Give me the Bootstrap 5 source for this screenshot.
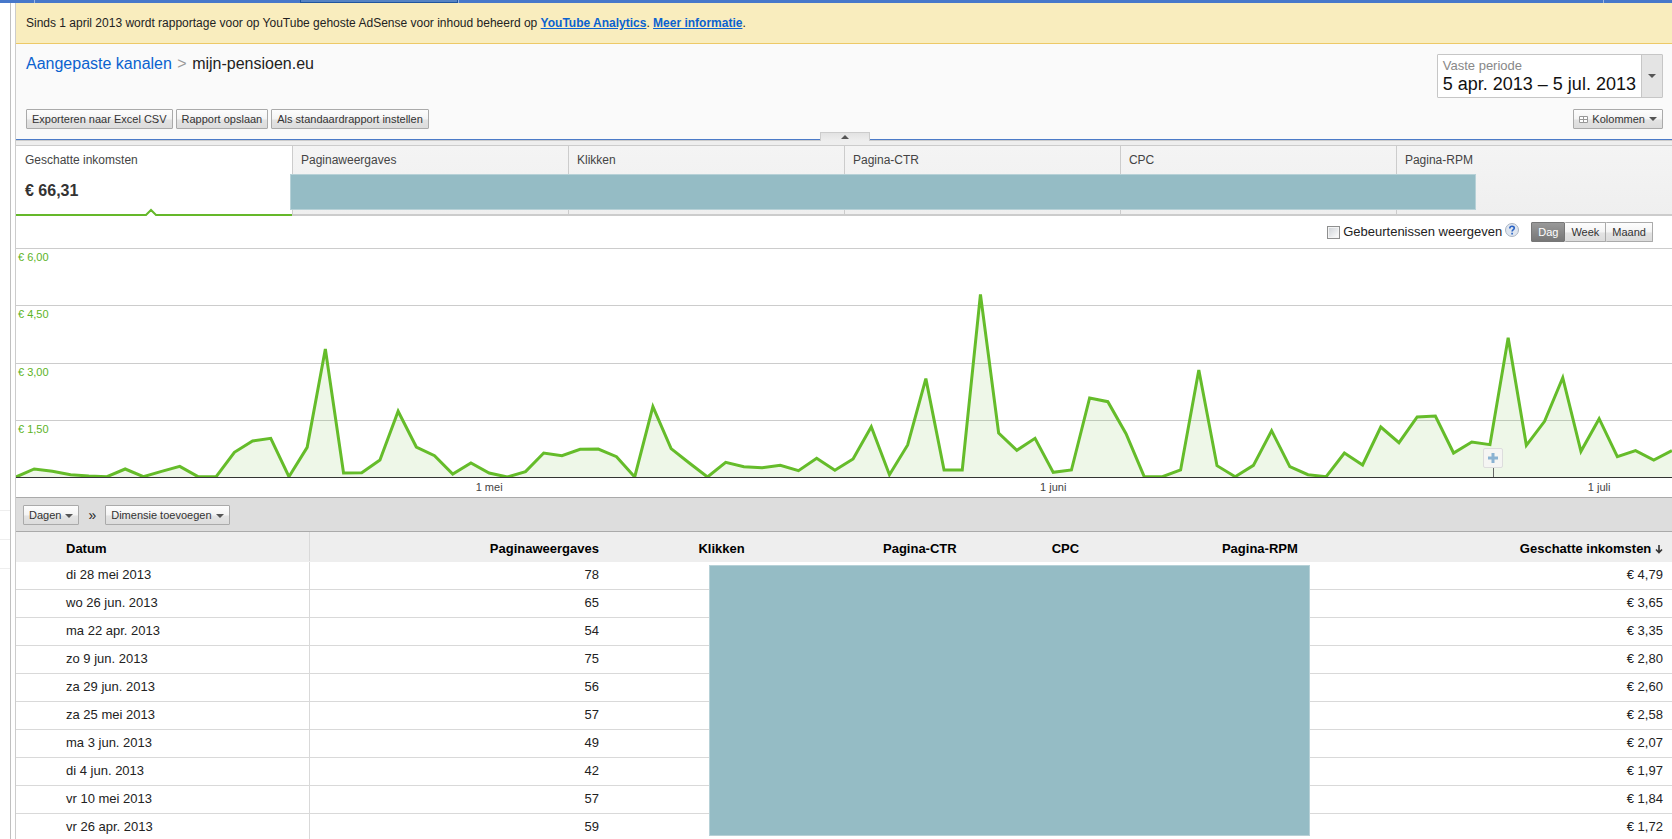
<!DOCTYPE html>
<html lang="nl">
<head>
<meta charset="utf-8">
<meta name="viewport" content="width=device-width, initial-scale=1">
<title>Prestatierapporten</title>
<link rel="stylesheet" href="https://cdn.jsdelivr.net/npm/bootstrap@5.3.0/dist/css/bootstrap.min.css">
<style>
  body { font-family: "Liberation Sans", Arial, sans-serif; font-size: 13px; line-height: 16px; color: #222; background: #fff; }
  a { color: #0b62cf; }

  /* Top strip */
  .topstrip { height: 3px; background: #4778ca; padding-left: 34px; }
  .topstrip .tick { width: 1px; background: #9db7e2; }
  .topstrip .tab-now { width: 158px; background: #5583c4; border: 1px solid #1f559f; border-top: 0; margin-left: 265px; }
  .topstrip .tick-end { margin-right: 68px; }

  /* Side strip */
  .sidestrip { width: 16px; border-right: 1px solid #ccc; }
  .sidestrip .inner { width: 11px; border-right: 1px solid #c0c0c0; padding-top: 507px; }
  .sidestrip .inner hr { margin: 0 0 28px; border-color: #bbb; }

  .notice { height: 41px; background: #f9edbe; border-bottom: 1px solid #edc967; font-size: 12px; color: #222; padding: 0 10px; }

  /* Report header */
  .report-head { background: #fafafa; border-bottom: 1px solid #4c7bc8; padding: 10px 9px 10px 10px; }
  .crumbs { font-size: 16px; line-height: 20px; }
  .crumbs .sep { color: #999; margin: 0 1px; }
  .actions { margin-top: 11px; }
  .period { border: 1px solid #c6c6c6; border-radius: 1px; background: #fff; height: 44px; padding: 0; color: #111; text-align: left; }
  .period .txt { padding: 3px 5px 0; font-size: 18px; line-height: 20px; }
  .period .txt small { font-size: 13px; line-height: 16px; color: #888; display: block; }
  .period .drop { width: 21px; background: #e4e4e4; border-left: 1px solid #c6c6c6; }
  .btn-adm { font-size: 11px; line-height: 18px; padding: 0 5px; color: #333; white-space: nowrap;
    border: 1px solid #aaa; border-radius: 1px; background: linear-gradient(#fdfdfd 0, #f4f4f4 50%, #e3e3e3 55%, #dcdcdc 100%); }
  .btn-adm:hover { border-color: #777; color: #111; }
  .btn-adm.active { color: #fff; border-color: #777; background: linear-gradient(#999, #777); }
  .scale-pick .btn-adm { padding: 0 6px; }
  .caret { width: 0; height: 0; border: 4px solid transparent; border-top-color: #555; border-bottom: 0; display: inline-block; vertical-align: middle; }
  .gap-3px { gap: 3px; }

  .fold { height: 6px; background: #eee; border-top: 1px solid #ccc; border-bottom: 1px solid #ccc; }
  .fold button { top: -9px; left: 50%; margin-left: -24px; width: 50px; height: 9px; padding: 0; border: 1px solid #ccc; border-bottom: 0; background: linear-gradient(#e2e2e2, #eee); line-height: 0; }
  .caret-up { width: 0; height: 0; border: 4px solid transparent; border-bottom-color: #555; border-top: 0; display: inline-block; }

  /* Score cards */
  .metric { height: 70px; padding: 6px 8px 0; font-size: 12px; line-height: 16px; color: #444; border-left: 1px solid #ccc; border-bottom: 2px solid #ccc; background: linear-gradient(#f4f4f4, #efefef); }
  .metric.current { background: #fff; border-left: 0; padding-left: 9px; border-bottom-color: #65b82a; }
  .metric strong { display: block; margin-top: 15px; font-size: 16px; color: #333; }
  .metric svg { left: 49%; bottom: -2px; transform: translateX(-50%); }
  .mask { background: #95bcc5; border: 1px solid #b7d1d7; }
  .mask-metrics { top: 28px; height: 36px; left: calc(100% / 6 - 2px); width: 71.6%; }
  .mask-table { top: 33px; height: 271px; left: 41.85%; width: 36.3%; }

  /* Chart */
  .chart-tools { height: 32px; padding-right: 19px; }
  .chart-tools label { margin: 0 3px; }
  .chart-tools input { width: 13px; height: 13px; appearance: none; border: 1px solid #8e8f8f; background: linear-gradient(135deg, #ccd0d5, #fff); outline: 1px solid #f4f4f4; outline-offset: -2px; }
  .plot { height: 230px; border-bottom: 1px solid #333; }
  .plot .band { border-top: 1px solid #ccc; font-size: 11px; line-height: 14px; color: #5cb324; padding: 1px 2px; }
  .plot .curve { inset: 0; width: 100%; height: 100%; }
  .note { left: 89.2%; bottom: 9px; width: 20px; height: 20px; margin-left: -10px; border: 1px solid #ddd; border-radius: 2px; background: #f5f5f3; padding: 0; line-height: 0; }
  .note-stem { left: 89.2%; bottom: 0; width: 1px; height: 9px; background: #666; }
  .axis { height: 19px; font-size: 11px; line-height: 18px; color: #444; }
  .axis span { transform: translateX(-50%); }

  .dims { height: 35px; background: #ddd; border-top: 1px solid #aaa; border-bottom: 1px solid #aaa; padding-left: 7px; }
  .dims .chev { font-size: 14px; padding: 0 9px; }

  /* Report table */
  .report { table-layout: fixed; width: 100%; }
  .report th, .report td { height: 28px; padding: 0 9px; text-align: right; border-bottom: 1px solid #d9d9d9; }
  .report th { height: 29px; padding-top: 5px; background: #eee; border-bottom-color: #eee; color: #000; }
  .report th:first-child, .report td:first-child { text-align: left; padding-left: 50px; border-right: 1px solid #d9d9d9; }
</style>
</head>
<body>
<div class="vh-100 overflow-hidden d-flex flex-column">
  <div class="topstrip d-flex flex-shrink-0">
    <span class="tick"></span><span class="tab-now"></span><span class="tick"></span><span class="tick tick-end ms-auto"></span>
  </div>
  <div class="d-flex flex-grow-1">
    <aside class="sidestrip flex-shrink-0 d-flex"><div class="inner"><hr><hr><hr></div></aside>
    <main class="flex-grow-1">
      <div class="notice d-flex align-items-center"><span>Sinds 1 april 2013 wordt rapportage voor op YouTube gehoste AdSense voor inhoud beheerd op <a class="fw-bold" href="#">YouTube Analytics</a>. <a class="fw-bold" href="#">Meer informatie</a>.</span></div>

      <header class="report-head">
        <div class="d-flex justify-content-between align-items-start">
          <nav class="crumbs" aria-label="Kruimelpad"><a class="text-decoration-none" href="#">Aangepaste kanalen</a> <span class="sep">&gt;</span> <span>mijn-pensioen.eu</span></nav>
          <button type="button" class="period d-flex">
            <span class="txt"><small>Vaste periode</small>5 apr. 2013 – 5 jul. 2013</span>
            <span class="drop d-flex align-items-center justify-content-center align-self-stretch"><i class="caret"></i></span>
          </button>
        </div>
        <div class="actions d-flex justify-content-between">
          <div class="d-flex gap-3px">
            <button type="button" class="btn-adm">Exporteren naar Excel CSV</button>
            <button type="button" class="btn-adm">Rapport opslaan</button>
            <button type="button" class="btn-adm">Als standaardrapport instellen</button>
          </div>
          <button type="button" class="btn-adm d-flex align-items-center">
            <svg class="me-1" width="9" height="7" viewBox="0 0 9 7" fill="#fff" stroke="#999"><path d="M.5.5h8v6h-8zM4.500.5v6M.5 3.500h8"/></svg>
            Kolommen <i class="caret ms-1"></i>
          </button>
        </div>
      </header>

      <div class="fold position-relative"><button type="button" class="position-absolute" aria-label="Inklappen"><i class="caret-up"></i></button></div>

      <section class="position-relative">
        <div class="row g-0">
          <div class="col metric current position-relative">Geschatte inkomsten<strong>€ 66,31</strong>
            <svg class="position-absolute" width="13" height="8" viewBox="0 0 13 8"><path d="M1.500 8V6L6.500 1l5 5v2z" fill="#fff"/><path d="M0 7h1.500l5-5 5 5H13" fill="none" stroke="#65b82a" stroke-width="2"/></svg>
          </div>
          <div class="col metric">Paginaweergaves</div>
          <div class="col metric">Klikken</div>
          <div class="col metric">Pagina-CTR</div>
          <div class="col metric">CPC</div>
          <div class="col metric">Pagina-RPM</div>
        </div>
        <div class="mask mask-metrics position-absolute"></div>
      </section>

      <div class="chart-tools d-flex align-items-center justify-content-end">
        <input type="checkbox" id="events">
        <label for="events">Gebeurtenissen weergeven</label>
        <svg class="mb-1" width="14" height="14" viewBox="0 0 14 14" role="img" aria-label="Hulp"><circle cx="7" cy="7" r="6.500" fill="#dfe6f0" stroke="#a9b4c2"/><path d="M4.800 5.400C4.800 2.600 9.300 2.700 9.300 5.100 9.300 6.700 7.100 6.700 7.100 8.600M7.100 9.800v1.600" fill="none" stroke="#2a63c4" stroke-width="1.600"/></svg>
        <div class="scale-pick d-flex ms-2 ps-1" role="group" aria-label="Periode">
          <button type="button" class="btn-adm active">Dag</button>
          <button type="button" class="btn-adm border-start-0">Week</button>
          <button type="button" class="btn-adm border-start-0">Maand</button>
        </div>
      </div>

      <div class="plot position-relative d-flex flex-column">
        <div class="band flex-fill">€ 6,00</div>
        <div class="band flex-fill">€ 4,50</div>
        <div class="band flex-fill">€ 3,00</div>
        <div class="band flex-fill">€ 1,50</div>
        <svg class="curve position-absolute" viewBox="0 0 91 687" preserveAspectRatio="none">
          <polygon id="area" fill="#65b82a" fill-opacity=".11"/>
          <polyline id="line" fill="none" stroke="#65bc2a" stroke-width="3" vector-effect="non-scaling-stroke"/>
        </svg>
        <span class="note-stem position-absolute"></span>
        <button type="button" class="note position-absolute" aria-label="Notitie toevoegen"><svg width="10" height="10" viewBox="0 0 10 10"><path d="M5 0v10M0 5h10" stroke="#8ab2d2" stroke-width="3"/></svg></button>
      </div>
      <div class="axis position-relative" id="axis"></div>

      <div class="dims d-flex align-items-center">
        <button type="button" class="btn-adm">Dagen<i class="caret ms-1"></i></button>
        <span class="chev">»</span>
        <button type="button" class="btn-adm">Dimensie toevoegen<i class="caret ms-1"></i></button>
      </div>

      <div class="position-relative">
        <table class="report">
          <colgroup><col style="width:17.75%"><col style="width:18%"><col style="width:8.8%"><col style="width:12.8%"><col style="width:7.4%"><col style="width:13.2%"><col></colgroup>
          <thead>
            <tr><th>Datum</th><th>Paginaweergaves</th><th>Klikken</th><th>Pagina-CTR</th><th>CPC</th><th>Pagina-RPM</th>
              <th>Geschatte inkomsten <svg width="8" height="9" viewBox="0 0 8 9"><path d="M4 0v7M1 4.500l3 3 3-3" fill="none" stroke="#333" stroke-width="1.600"/></svg></th></tr>
          </thead>
          <tbody>
            <tr><td>di 28 mei 2013</td><td>78</td><td></td><td></td><td></td><td></td><td>€ 4,79</td></tr>
            <tr><td>wo 26 jun. 2013</td><td>65</td><td></td><td></td><td></td><td></td><td>€ 3,65</td></tr>
            <tr><td>ma 22 apr. 2013</td><td>54</td><td></td><td></td><td></td><td></td><td>€ 3,35</td></tr>
            <tr><td>zo 9 jun. 2013</td><td>75</td><td></td><td></td><td></td><td></td><td>€ 2,80</td></tr>
            <tr><td>za 29 jun. 2013</td><td>56</td><td></td><td></td><td></td><td></td><td>€ 2,60</td></tr>
            <tr><td>za 25 mei 2013</td><td>57</td><td></td><td></td><td></td><td></td><td>€ 2,58</td></tr>
            <tr><td>ma 3 jun. 2013</td><td>49</td><td></td><td></td><td></td><td></td><td>€ 2,07</td></tr>
            <tr><td>di 4 jun. 2013</td><td>42</td><td></td><td></td><td></td><td></td><td>€ 1,97</td></tr>
            <tr><td>vr 10 mei 2013</td><td>57</td><td></td><td></td><td></td><td></td><td>€ 1,84</td></tr>
            <tr><td>vr 26 apr. 2013</td><td>59</td><td></td><td></td><td></td><td></td><td>€ 1,72</td></tr>
          </tbody>
        </table>
        <div class="mask mask-table position-absolute"></div>
      </div>
    </main>
  </div>
</div>
<script src="https://cdn.jsdelivr.net/npm/bootstrap@5.3.0/dist/js/bootstrap.bundle.min.js"></script>
<script>
  // One value per day, 5 April to 5 July; 687 is the top of the scale (€ 6,00).
  const days = [
    0,24,17,7,3,1,24,1,17,32,1,1,74,108,116,1,89,384,12,13,51,197,90,64,9,42,
    12,0,16,72,64,83,84,61,0,211,85,42,0,44,31,28,35,19,56,20,54,151,7,96,295,21,21,548,132,80,116,
    14,21,237,226,130,1,1,21,321,34,1,35,139,31,7,1,72,36,150,103,180,183,72,105,97,418,95,167,298,77,
    175,61,79,51,79];
  const pts = days.map((v, i) => i + "," + (687 - v)).join(" ");
  document.getElementById("line").setAttribute("points", pts);
  document.getElementById("area").setAttribute("points", "0,687 " + pts + " 91,687");
  for (const [day, name] of [[26, "1 mei"], [57, "1 juni"], [87, "1 juli"]]) {
    const s = document.createElement("span");
    s.className = "position-absolute text-nowrap";
    s.style.left = (day / 91 * 100) + "%";
    s.textContent = name;
    document.getElementById("axis").append(s);
  }
</script>
</body>
</html>
